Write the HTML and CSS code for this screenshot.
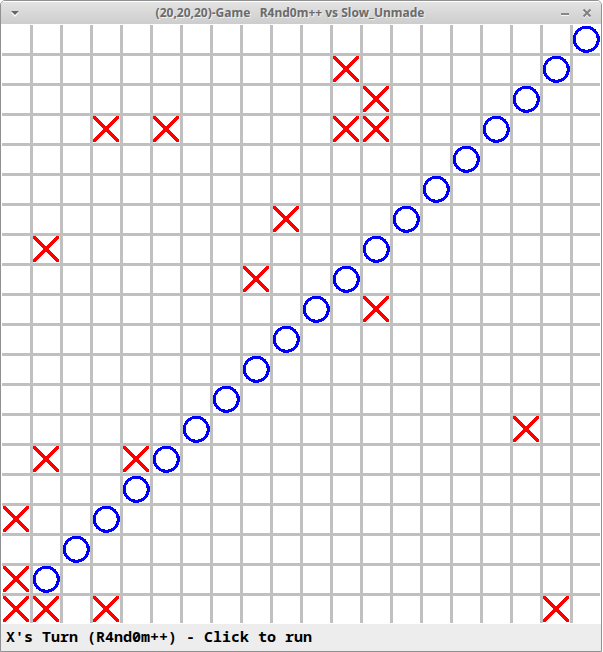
FILE: index.html
```html
<!DOCTYPE html>
<html lang="en">
<head>
<meta charset="utf-8">
<title>(20,20,20)-Game</title>
<link rel="stylesheet" href="styles.css">
</head>
<body>
<main class="window">
  <header class="titlebar">
    <button class="control" type="button" aria-label="Window menu">
      <svg class="icon" viewBox="0 0 12 12"><path d="M2 5h8l-4 5z" fill="#fff"/><path d="M2 4h8l-4 4z" fill="#666"/></svg>
    </button>
    <h1 class="title">(20,20,20)-Game   R4nd0m++ vs Slow_Unmade</h1>
    <button class="control" type="button" aria-label="Minimize">
      <svg class="icon" viewBox="0 0 12 12"><path d="M2 7h8v2H2z" fill="#f4f4f4"/><path d="M2 6h8v2H2z" fill="#888"/></svg>
    </button>
    <button class="control" type="button" aria-label="Close">
      <svg class="icon" viewBox="0 0 12 12" fill="none" stroke-width="2"><path d="M2.5 3.5l7 7m0-7l-7 7" stroke="#f4f4f4"/><path d="M2.5 2.5l7 7m0-7l-7 7" stroke="#808080"/></svg>
    </button>
  </header>
  <svg class="board" id="board" viewBox="0 0 600 600" role="img" aria-label="Game board">
    <defs>
      <path id="x" class="cross" d="M3.5 3.5L26.5 26.5M26.5 3.5L3.5 26.5"/>
      <circle id="o" class="ring" cx="15.3" cy="15.3" r="12"/>
    </defs>
    <path id="lines" class="lines"/>
    <g id="marks"></g>
  </svg>
  <footer class="status">X's Turn (R4nd0m++) - Click to run</footer>
</main>
<script src="board.js"></script>
</body>
</html>
```
FILE: styles.css
```css
* {
  box-sizing: border-box;
}

body {
  margin: 0;
  background: #fff;
}

.window {
  display: flex;
  flex-direction: column;
  margin-right: 1px;
  border: 1px solid #919191;
  border-radius: 5px 5px 0 0;
  background: #fff;
  overflow: hidden;
}

.titlebar {
  display: flex;
  align-items: center;
  height: 23px;
  padding: 0 3px;
  border-top: 1px solid #fff;
  background: linear-gradient(#e3e3e3, #cdcdcd);
}

.control {
  display: grid;
  place-items: center;
  width: 22px;
  height: 22px;
  padding: 0;
  border: 0;
  background: none;
}

.icon {
  width: 12px;
  height: 12px;
}

.title {
  flex: 1;
  margin: 0;
  color: #6b6b6b;
  font: bold 12px/22px "Noto Sans", "Open Sans", sans-serif;
  text-align: center;
  text-shadow: 1px 1px 0 #f0f0f0;
  white-space: pre;
}

.board {
  display: block;
  width: 100%;
  height: auto;
  background: #fff;
}

.lines {
  fill: none;
  stroke: #c0c0c0;
  stroke-width: 3px;
}

.cross,
.ring {
  fill: none;
  stroke-width: 3px;
  shape-rendering: crispEdges;
}

.cross {
  stroke: #f00;
  stroke-linecap: round;
}

.ring {
  stroke: #00f;
}

.status {
  padding: 0 5px 2px;
  background: #ededed;
  color: #000;
  font: bold 15px/25px "Noto Sans Mono", "DejaVu Sans Mono", monospace;
}
```
FILE: board.js
```js
const SIZE = 20;
const CELL = 30;

// Marks as [column, row], counted from the top left.
const crosses = [
  [11, 1], [12, 2], [3, 3], [5, 3], [11, 3], [12, 3], [9, 6], [1, 7],
  [8, 8], [12, 9], [17, 13], [1, 14], [4, 14], [0, 16], [0, 18],
  [0, 19], [1, 19], [3, 19], [18, 19]
];
const rings = Array.from({ length: 19 }, (_, row) => [19 - row, row]);

let lines = "";
for (let i = 1; i < SIZE; i++) {
  const at = i * CELL + 0.5;
  lines += `M${at} 1V599M1 ${at}H599`;
}
document.getElementById("lines").setAttribute("d", lines);

const place = (id) => ([col, row]) =>
  `<use href="#${id}" x="${col * CELL}" y="${row * CELL}"/>`;
document.getElementById("marks").innerHTML =
  crosses.map(place("x")).join("") + rings.map(place("o")).join("");
```
